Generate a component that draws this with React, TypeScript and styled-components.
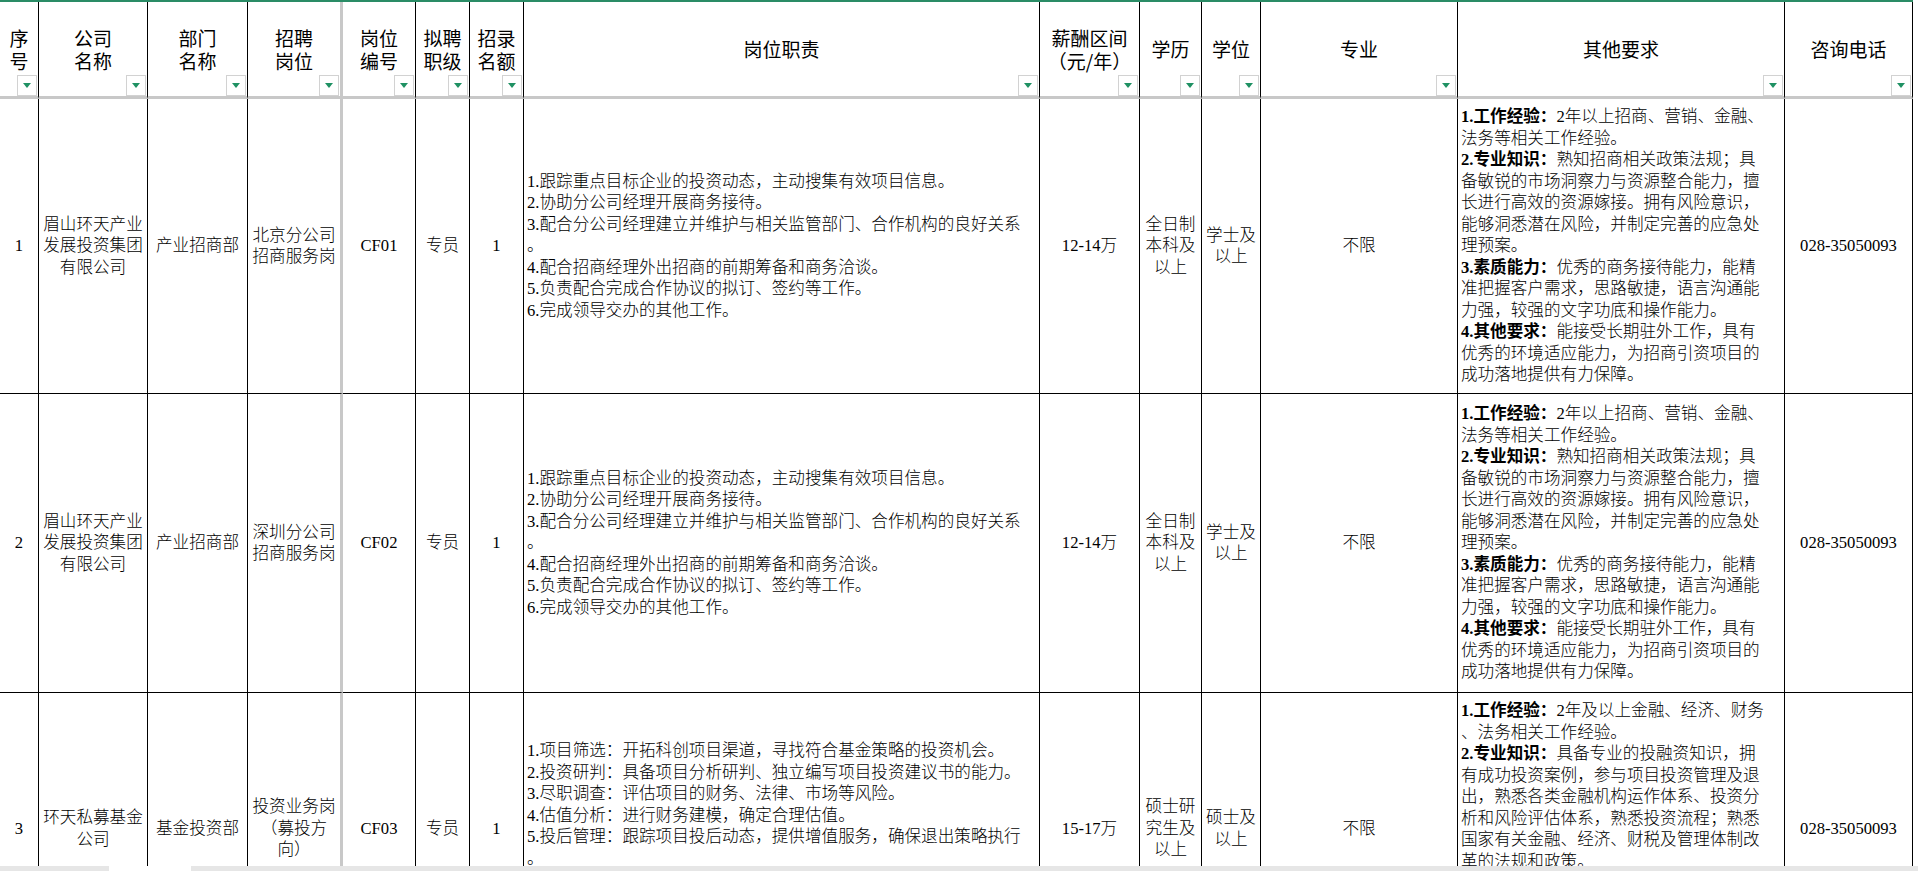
import React from "react";
import styled, { createGlobalStyle } from "styled-components";

// column widths in px, taken off the sheet; col 4 carries the frozen-pane line
const COLS = [39, 109, 100, 95, 73, 54, 54, 516, 100, 62, 59, 197, 327, 128];
const FREEZE = 3;
const SHEET_WIDTH = COLS.reduce((a, b) => a + b, 0);

type CellData = {
  lines: string[];
  left?: boolean;
  top?: number;
  rich?: boolean;
};

const headers: string[][] = [
  ["序", "号"],
  ["公司", "名称"],
  ["部门", "名称"],
  ["招聘", "岗位"],
  ["岗位", "编号"],
  ["拟聘", "职级"],
  ["招录", "名额"],
  ["岗位职责"],
  ["薪酬区间", "（元/年）"],
  ["学历"],
  ["学位"],
  ["专业"],
  ["其他要求"],
  ["咨询电话"],
];

const salesDuties = [
  "1.跟踪重点目标企业的投资动态，主动搜集有效项目信息。",
  "2.协助分公司经理开展商务接待。",
  "3.配合分公司经理建立并维护与相关监管部门、合作机构的良好关系",
  "。",
  "4.配合招商经理外出招商的前期筹备和商务洽谈。",
  "5.负责配合完成合作协议的拟订、签约等工作。",
  "6.完成领导交办的其他工作。",
];

const salesReqs = [
  "1.工作经验：2年以上招商、营销、金融、",
  "法务等相关工作经验。",
  "2.专业知识：熟知招商相关政策法规；具",
  "备敏锐的市场洞察力与资源整合能力，擅",
  "长进行高效的资源嫁接。拥有风险意识，",
  "能够洞悉潜在风险，并制定完善的应急处",
  "理预案。",
  "3.素质能力：优秀的商务接待能力，能精",
  "准把握客户需求，思路敏捷，语言沟通能",
  "力强，较强的文字功底和操作能力。",
  "4.其他要求：能接受长期驻外工作，具有",
  "优秀的环境适应能力，为招商引资项目的",
  "成功落地提供有力保障。",
];

const fundDuties = [
  "1.项目筛选：开拓科创项目渠道，寻找符合基金策略的投资机会。",
  "2.投资研判：具备项目分析研判、独立编写项目投资建议书的能力。",
  "3.尽职调查：评估项目的财务、法律、市场等风险。",
  "4.估值分析：进行财务建模，确定合理估值。",
  "5.投后管理：跟踪项目投后动态，提供增值服务，确保退出策略执行",
  "。",
];

const fundReqs = [
  "1.工作经验：2年及以上金融、经济、财务",
  "、法务相关工作经验。",
  "2.专业知识：具备专业的投融资知识，拥",
  "有成功投资案例，参与项目投资管理及退",
  "出，熟悉各类金融机构运作体系、投资分",
  "析和风险评估体系，熟悉投资流程；熟悉",
  "国家有关金融、经济、财税及管理体制改",
  "革的法规和政策。",
];

const salesRow = (no: string, branch: string, code: string): CellData[] => [
  { lines: [no] },
  { lines: ["眉山环天产业", "发展投资集团", "有限公司"] },
  { lines: ["产业招商部"] },
  { lines: [branch, "招商服务岗"] },
  { lines: [code] },
  { lines: ["专员"] },
  { lines: ["1"] },
  { lines: salesDuties, left: true },
  { lines: ["12-14万"] },
  { lines: ["全日制", "本科及", "以上"] },
  { lines: ["学士及", "以上"] },
  { lines: ["不限"] },
  { lines: salesReqs, left: true, rich: true },
  { lines: ["028-35050093"] },
];

const rows: CellData[][] = [
  salesRow("1", "北京分公司", "CF01"),
  salesRow("2", "深圳分公司", "CF02"),
  [
    { lines: ["3"] },
    { lines: ["环天私募基金", "公司"] },
    { lines: ["基金投资部"] },
    { lines: ["投资业务岗", "（募投方", "向）"] },
    { lines: ["CF03"] },
    { lines: ["专员"] },
    { lines: ["1"] },
    { lines: fundDuties, left: true, top: 47 },
    { lines: ["15-17万"] },
    { lines: ["硕士研", "究生及", "以上"] },
    { lines: ["硕士及", "以上"] },
    { lines: ["不限"] },
    { lines: fundReqs, left: true, rich: true, top: 7 },
    { lines: ["028-35050093"] },
  ],
];

const GlobalStyle = createGlobalStyle`
  html, body {
    margin: 0;
    padding: 0;
    background: #fff;
  }
  body {
    overflow: hidden;
    color: #000;
    font-family: "Liberation Serif", "Noto Sans CJK SC", serif;
  }
`;

const Page = styled.div`
  width: 1918px;
  height: 871px;
  display: flex;
  flex-direction: column;
  overflow: hidden;
  background: #fff;
`;

const Viewport = styled.div`
  flex: 1;
  min-height: 0;
  overflow: hidden;
`;

const Sheet = styled.div`
  width: ${SHEET_WIDTH}px;
  display: grid;
  grid-template-columns: ${COLS.map((w) => `${w}px`).join(" ")};
  grid-template-rows: 97px 295px 299px 272px;
  border-top: 2px solid #2a8c66;
`;

const HeadCell = styled.div<{ $freeze?: boolean }>`
  position: relative;
  box-sizing: border-box;
  display: flex;
  align-items: center;
  justify-content: center;
  padding-bottom: 1px;
  border-right: ${(p) => (p.$freeze ? "3px solid #c8c8c8" : "1px solid #000")};
  border-bottom: 3px solid #c8c8c8;
`;

const HeadText = styled.div`
  font-family: "Noto Sans CJK SC", sans-serif;
  font-size: 19px;
  line-height: 23px;
  text-align: center;
  white-space: nowrap;
`;

const FilterButton = styled.div`
  position: absolute;
  right: 1px;
  bottom: 0;
  width: 20px;
  height: 21px;
  box-sizing: border-box;
  border: 1px solid #d2d2d2;
  background: #fff;
  display: flex;
  align-items: center;
  justify-content: center;

  &::after {
    content: "";
    width: 0;
    height: 0;
    border-left: 4px solid transparent;
    border-right: 4px solid transparent;
    border-top: 5px solid #1f9163;
  }
`;

const Cell = styled.div<{ $freeze?: boolean; $left?: boolean; $top?: number }>`
  box-sizing: border-box;
  display: flex;
  flex-direction: column;
  justify-content: ${(p) => (p.$top !== undefined ? "flex-start" : "center")};
  align-items: ${(p) => (p.$left ? "flex-start" : "center")};
  padding-top: ${(p) => p.$top ?? 0}px;
  padding-left: ${(p) => (p.$left ? 3 : 0)}px;
  border-right: ${(p) => (p.$freeze ? "3px solid #c8c8c8" : "1px solid #000")};
  border-bottom: 1px solid #000;
  overflow: hidden;
  font-size: 16.6px;
  line-height: 21.5px;
  font-weight: 300;
`;

const Line = styled.div<{ $left?: boolean }>`
  white-space: pre;
  text-align: ${(p) => (p.$left ? "left" : "center")};
`;

const Label = styled.span`
  font-weight: 700;
`;

const ScrollStrip = styled.div`
  height: 5px;
  flex: none;
  display: flex;
  background: #ebebeb;
`;

const StripPiece = styled.div<{ $w?: number; $light?: boolean }>`
  width: ${(p) => (p.$w ? `${p.$w}px` : "auto")};
  flex: ${(p) => (p.$w ? "none" : "1")};
  background: ${(p) => (p.$light ? "#fff" : "#e6e6e6")};
`;

const renderLine = (text: string, rich?: boolean) => {
  if (!rich) return text;
  const m = text.match(/^(\d\.[^：]{2,6}：)(.*)$/);
  if (!m) return text;
  return (
    <>
      <Label>{m[1]}</Label>
      {m[2]}
    </>
  );
};

export default function App() {
  return (
    <Page>
      <GlobalStyle />
      <Viewport>
        <Sheet>
          {headers.map((h, i) => (
            <HeadCell key={`h${i}`} $freeze={i === FREEZE}>
              <HeadText>
                {h.map((t, k) => (
                  <React.Fragment key={t}>
                    {k > 0 && <br />}
                    {t}
                  </React.Fragment>
                ))}
              </HeadText>
              <FilterButton />
            </HeadCell>
          ))}
          {rows.map((row, r) =>
            row.map((c, i) => (
              <Cell
                key={`${r}-${i}`}
                $freeze={i === FREEZE}
                $left={c.left}
                $top={c.top}
              >
                {c.lines.map((l, k) => (
                  <Line key={k} $left={c.left}>
                    {renderLine(l, c.rich)}
                  </Line>
                ))}
              </Cell>
            ))
          )}
        </Sheet>
      </Viewport>
      <ScrollStrip>
        <StripPiece $w={109} />
        <StripPiece $w={82} $light />
        <StripPiece />
      </ScrollStrip>
    </Page>
  );
}
